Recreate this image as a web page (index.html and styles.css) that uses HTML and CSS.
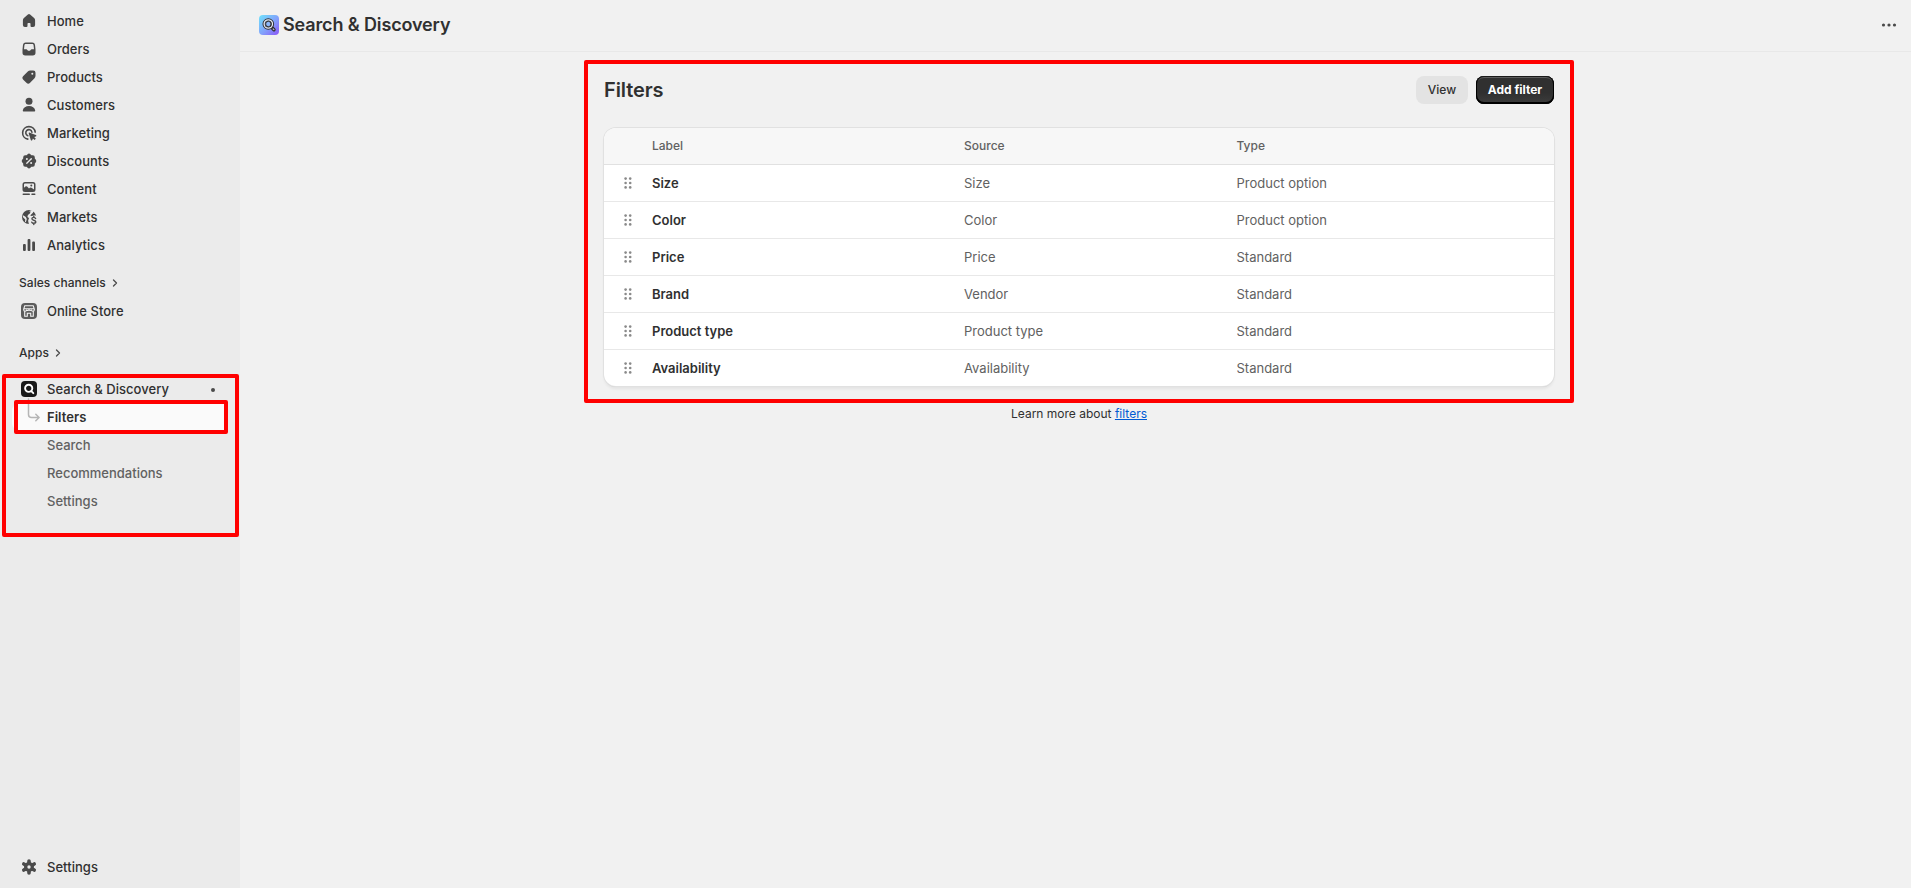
FILE: index.html
```html
<!DOCTYPE html>
<html lang="en">
<head>
    <meta charset="UTF-8">
    <meta name="viewport" content="width=device-width, initial-scale=1.0">
    <title>Search &amp; Discovery - Filters</title>
    <link rel="stylesheet" href="styles.css">
</head>
<body>

    <aside class="sidebar">
        <nav class="nav">
            <a class="nav-item">
                <svg class="icon" viewBox="0 0 20 20"><path d="M8.9 3.4a1.6 1.6 0 0 1 2.2 0l4 3.7c.7.6 1 1.5 1 2.4v4.6a2 2 0 0 1-2 2h-1.6a1 1 0 0 1-1-1v-2.4a.75.75 0 0 0-.75-.75h-1.5a.75.75 0 0 0-.75.75v2.4a1 1 0 0 1-1 1H5.9a2 2 0 0 1-2-2V9.500c0-.9.3-1.800 1-2.400z"/></svg>
                <span>Home</span>
            </a>
            <a class="nav-item">
                <svg class="icon" viewBox="0 0 20 20"><path fill-rule="evenodd" d="M6.700 3.500a2.750 2.750 0 0 0-2.700 2.300l-.5 4.700v3.250a2.750 2.750 0 0 0 2.750 2.750h7.500a2.750 2.750 0 0 0 2.750-2.750V10.500l-.5-4.700a2.750 2.750 0 0 0-2.700-2.300zM5.450 6.100c.1-.65.600-1.100 1.250-1.100h6.600c.65 0 1.150.45 1.250 1.100l.45 4.150h-2.300c-.45 0-.8.250-1.050.65-.35.600-.9.900-1.650.900s-1.300-.3-1.650-.9c-.25-.4-.6-.65-1.050-.65H5z"/></svg>
                <span>Orders</span>
            </a>
            <a class="nav-item">
                <svg class="icon" viewBox="0 0 20 20"><path fill-rule="evenodd" d="M11.200 3.500h3.050a2.250 2.250 0 0 1 2.250 2.250v3.100c0 .9-.35 1.750-1 2.400l-4.400 4.500a2.600 2.600 0 0 1-3.700 0l-3.100-3.100a2.600 2.600 0 0 1 0-3.700l4.500-4.450a3.400 3.400 0 0 1 2.400-1zM13.300 7.700a1 1 0 1 0 0-2 1 1 0 0 0 0 2z"/></svg>
                <span>Products</span>
            </a>
            <a class="nav-item">
                <svg class="icon" viewBox="0 0 20 20"><circle cx="10" cy="6.300" r="3.500"/><path d="M3.800 15.400c.4-2.700 3-4.300 6.200-4.300s5.800 1.600 6.200 4.300c.1.700-.4 1.200-1 1.200H4.800c-.6 0-1.100-.5-1-1.200z"/></svg>
                <span>Customers</span>
            </a>
            <a class="nav-item">
                <svg class="icon" viewBox="0 0 20 20"><g class="line"><path d="M16.200 9.200A6.300 6.300 0 1 0 8.800 16.100"/><path d="M12.900 9.100a3.100 3.100 0 1 0-4.100 3.600"/></g><path d="M9.800 10.700c-.3-.7.300-1.300 1-1l6 2.200c.8.300.8 1.300 0 1.600l-1.600.6 1.600 1.700-1.200 1.200-1.700-1.600-.6 1.500c-.3.800-1.300.7-1.500 0z"/></svg>
                <span>Marketing</span>
            </a>
            <a class="nav-item">
                <svg class="icon" viewBox="0 0 20 20"><path d="M8.600 3.300a2 2 0 0 1 2.800 0l1 .9h1.400a2 2 0 0 1 2 2v1.400l.9 1a2 2 0 0 1 0 2.800l-.9 1v1.400a2 2 0 0 1-2 2h-1.400l-1 .9a2 2 0 0 1-2.800 0l-1-.9H6.200a2 2 0 0 1-2-2v-1.400l-.9-1a2 2 0 0 1 0-2.800l.9-1V6.200a2 2 0 0 1 2-2h1.400z"/><path class="cut" d="M7.800 12.300l4.500-4.600"/><circle class="hole" cx="7.900" cy="8" r="1"/><circle class="hole" cx="12.100" cy="12" r="1"/></svg>
                <span>Discounts</span>
            </a>
            <a class="nav-item">
                <svg class="icon" viewBox="0 0 20 20"><path fill-rule="evenodd" d="M6 3h8a2.500 2.500 0 0 1 2.500 2.500v5A2.500 2.500 0 0 1 14 13H6a2.500 2.500 0 0 1-2.500-2.500v-5A2.500 2.500 0 0 1 6 3zM6 4.500a1 1 0 0 0-1 1v3.300l1.400-1.200a1.300 1.300 0 0 1 1.700 0l1.900 1.800.9-.7a1.300 1.300 0 0 1 1.600 0l2.500 1.700V5.500a1 1 0 0 0-1-1zM12.300 7.500a1 1 0 1 0 0-2 1 1 0 0 0 0 2z"/><path d="M4.250 14.500h6a.75.75 0 0 1 0 1.500h-6a.75.75 0 0 1 0-1.500zM13 14.500h2.750a.75.75 0 0 1 0 1.500H13a.75.75 0 0 1 0-1.500z"/></svg>
                <span>Content</span>
            </a>
            <a class="nav-item">
                <svg class="icon" viewBox="0 0 20 20"><circle cx="10" cy="10" r="7"/><path class="hole" d="M9.700 4.300l2 .3-.9 2-1.900 1.500-.5 1.800 1.600 1.200-.9 2.600.8 3.600h8.600V9.500l-3.200-1.300-2.600.8-1.500-.6 2.700-2.600 1.200-2.500-2-.3zM4.200 8.200l2.600 1.700 1 2.200-.9 3.200-.9-.6.300-2.300-2.500-2.500z"/><path class="line dollar" d="M16.600 11.500c-.3-.7-1-1.100-1.800-1.100-1.100 0-1.900.500-1.900 1.400 0 1.900 3.900 1 3.900 3 0 .9-.9 1.500-2 1.500-.9 0-1.700-.4-2-1.100M14.800 9.100v1.200M14.800 16.400v1.200"/></svg>
                <span>Markets</span>
            </a>
            <a class="nav-item">
                <svg class="icon" viewBox="0 0 20 20"><rect x="4" y="9" width="2.800" height="7" rx="1"/><rect x="8.600" y="4" width="2.800" height="12" rx="1"/><rect x="13.200" y="6.500" width="2.800" height="9.500" rx="1"/></svg>
                <span>Analytics</span>
            </a>
        </nav>

        <div class="section-title">
            <span>Sales channels</span>
            <svg class="chevron" viewBox="0 0 8 8"><path d="M2.500 1l3 3-3 3"/></svg>
        </div>
        <nav class="nav">
            <a class="nav-item">
                <svg class="icon" viewBox="0 0 20 20"><rect class="store-bg" x="2" y="2" width="16" height="16" rx="4"/><path class="store-line" d="M5.800 4.700h8.400l1.100 3.500v.6a1.400 1.400 0 0 1-2.800 0 1.400 1.400 0 0 1-2.500 0 1.400 1.400 0 0 1-2.500 0 1.400 1.400 0 0 1-2.800 0v-.6zM5 7.700h10M5.700 10.200v5.100h2.600v-3.100h3.400v3.100h2.600v-5.100"/></svg>
                <span>Online Store</span>
            </a>
        </nav>

        <div class="section-title apps-title">
            <span>Apps</span>
            <svg class="chevron" viewBox="0 0 8 8"><path d="M2.500 1l3 3-3 3"/></svg>
        </div>
        <div class="app-group">
            <nav class="nav">
                <a class="nav-item">
                    <svg class="icon" viewBox="0 0 20 20"><rect class="app-bg" x="2" y="2" width="16" height="16" rx="4"/><circle class="app-line" cx="9.700" cy="9.300" r="3.600"/><path class="app-line" d="M12.300 12.200l2 2"/></svg>
                    <span>Search &amp; Discovery</span>
                    <i class="pin-dot"></i>
                </a>
                <a class="nav-item active">
                    <svg class="icon branch" viewBox="0 0 20 28"><path d="M9.500 0v15.500a3 3 0 0 0 3 3H20M16.800 15.200l3.300 3.300-3.300 3.300"/></svg>
                    <span>Filters</span>
                </a>
                <a class="nav-item sub">Search</a>
                <a class="nav-item sub">Recommendations</a>
                <a class="nav-item sub">Settings</a>
            </nav>
            <div class="highlight highlight-app"></div>
            <div class="highlight highlight-link"></div>
        </div>

        <nav class="nav nav-bottom">
            <a class="nav-item">
                <svg class="icon" viewBox="0 0 20 20"><g class="gear"><path d="M10 4v12M4.800 7l10.400 6M15.200 7L4.800 13"/></g><circle cx="10" cy="10" r="5"/><circle class="hole" cx="10" cy="10" r="1.700"/></svg>
                <span>Settings</span>
            </a>
        </nav>
    </aside>

    <main class="main">
        <header class="topbar">
            <svg class="app-logo" viewBox="0 0 20 20">
                <defs>
                    <linearGradient id="logoFill" x1="0" y1="0" x2="1" y2="1">
                        <stop offset="0" stop-color="#6fe3fb"/>
                        <stop offset=".55" stop-color="#839ffb"/>
                        <stop offset="1" stop-color="#8a55f7"/>
                    </linearGradient>
                </defs>
                <rect width="20" height="20" rx="4" fill="url(#logoFill)"/>
                <path class="lens-dark" d="M12.800 12.500l2.200 2.300"/>
                <circle class="lens-ring" cx="9.300" cy="9" r="4.300"/>
                <circle class="lens-light" cx="9.300" cy="9" r="4.200"/>
                <circle class="lens-inner" cx="9.300" cy="9" r="2.700"/>
                <path class="lens-handle" d="M14.200 14l.7.700"/>
            </svg>
            <h1>Search &amp; Discovery</h1>
            <svg class="more" viewBox="0 0 20 20"><circle cx="4.500" cy="10" r="1.600"/><circle cx="10" cy="10" r="1.600"/><circle cx="15.500" cy="10" r="1.600"/></svg>
        </header>

        <section class="page">
            <div class="page-header">
                <h2>Filters</h2>
                <button class="btn">View</button>
                <button class="btn btn-primary">Add filter</button>
            </div>

            <div class="card">
                <div class="row row-head">
                    <span></span><span>Label</span><span>Source</span><span>Type</span>
                </div>
                <div class="row">
                    <svg class="drag" viewBox="0 0 8 12"><use href="#dots"/></svg>
                    <b>Size</b><span>Size</span><span>Product option</span>
                </div>
                <div class="row">
                    <svg class="drag" viewBox="0 0 8 12"><use href="#dots"/></svg>
                    <b>Color</b><span>Color</span><span>Product option</span>
                </div>
                <div class="row">
                    <svg class="drag" viewBox="0 0 8 12"><use href="#dots"/></svg>
                    <b>Price</b><span>Price</span><span>Standard</span>
                </div>
                <div class="row">
                    <svg class="drag" viewBox="0 0 8 12"><use href="#dots"/></svg>
                    <b>Brand</b><span>Vendor</span><span>Standard</span>
                </div>
                <div class="row">
                    <svg class="drag" viewBox="0 0 8 12"><use href="#dots"/></svg>
                    <b>Product type</b><span>Product type</span><span>Standard</span>
                </div>
                <div class="row">
                    <svg class="drag" viewBox="0 0 8 12"><use href="#dots"/></svg>
                    <b>Availability</b><span>Availability</span><span>Standard</span>
                </div>
            </div>

            <p class="learn-more">Learn more about <a href="#">filters</a></p>
            <div class="highlight highlight-page"></div>
        </section>
    </main>

    <svg class="sprite">
        <defs>
            <g id="dots">
                <circle cx="1.600" cy="1.600" r="1.300"/><circle cx="6.200" cy="1.600" r="1.300"/>
                <circle cx="1.600" cy="6" r="1.300"/><circle cx="6.200" cy="6" r="1.300"/>
                <circle cx="1.600" cy="10.400" r="1.300"/><circle cx="6.200" cy="10.400" r="1.300"/>
            </g>
        </defs>
    </svg>

</body>
</html>
```

FILE: styles.css
```css
* {
    box-sizing: border-box;
}

body {
    margin: 0;
    height: 100vh;
    display: flex;
    overflow: hidden;
    background: #f1f1f1;
    color: #303030;
    font-family: Inter, "Liberation Sans", sans-serif;
    font-size: 13px;
    line-height: 20px;
}

/* --- Sidebar --- */
.sidebar {
    width: 240px;
    flex: none;
    display: flex;
    flex-direction: column;
    padding: 7px 12px 7px;
    background: #ebebeb;
}

.nav-item {
    position: relative;
    display: flex;
    align-items: center;
    gap: 8px;
    height: 28px;
    padding-left: 7px;
    border-radius: 8px;
    font-weight: 550;
    letter-spacing: .03px;
}

.nav-item.sub {
    padding-left: 35px;
    font-weight: 450;
    letter-spacing: 0;
    color: #616161;
}

.nav-item.active {
    background: #fafafa;
    font-weight: 600;
}

.icon {
    width: 20px;
    height: 20px;
    flex: none;
    fill: #4a4a4a;
}

.icon .line {
    fill: none;
    stroke: #4a4a4a;
    stroke-width: 1.6;
    stroke-linecap: round;
}

.icon .dollar {
    stroke-width: 1.4;
}

.icon .gear {
    stroke: #4a4a4a;
    stroke-width: 3.6;
    stroke-linecap: round;
}

.icon .cut {
    fill: none;
    stroke: #ebebeb;
    stroke-width: 1.3;
    stroke-linecap: round;
}

.icon .hole {
    fill: #ebebeb;
}

.icon .store-bg {
    fill: #5c5c5c;
}

.icon .store-line {
    fill: none;
    stroke: #f3f3f3;
    stroke-width: 1.1;
}

.icon .app-bg {
    fill: #1a1a1a;
}

.icon .app-line {
    fill: none;
    stroke: #fff;
    stroke-width: 1.9;
    stroke-linecap: round;
}

.icon.branch {
    height: 28px;
    margin-top: -8px;
    fill: none;
    stroke: #b5b5b5;
    stroke-width: 1.5;
    stroke-linecap: round;
    stroke-linejoin: round;
    overflow: visible;
}

.pin-dot {
    width: 4px;
    height: 4px;
    margin: 1px 13px 0 auto;
    border-radius: 50%;
    background: #4a4a4a;
}

.section-title {
    display: flex;
    align-items: center;
    gap: 5px;
    height: 28px;
    margin-top: 10px;
    padding-left: 7px;
    font-size: 12px;
    font-weight: 550;
    letter-spacing: .04px;
}

.apps-title {
    margin-top: 14px;
}

.chevron {
    width: 8px;
    height: 8px;
    fill: none;
    stroke: #4a4a4a;
    stroke-width: 1.3;
    stroke-linecap: round;
    stroke-linejoin: round;
}

.app-group {
    position: relative;
    margin-top: 8px;
}

.nav-bottom {
    margin-top: auto;
}

/* --- Red marker frames --- */
.highlight {
    position: absolute;
    border: 4px solid #f00;
    border-radius: 2px;
    pointer-events: none;
}

.highlight-app {
    top: -1px;
    left: -10px;
    width: 237px;
    height: 163px;
}

.highlight-link {
    top: 25px;
    left: 2px;
    width: 214px;
    height: 34px;
}

.highlight-page {
    top: 8px;
    left: -20px;
    width: 990px;
    height: 343px;
}

/* --- Top bar --- */
.main {
    flex: 1;
}

.topbar {
    display: flex;
    align-items: center;
    height: 52px;
    padding: 0 12px 2px 19px;
    border-bottom: 1px solid #e8e8e8;
}

.topbar h1 {
    margin: 0 auto 0 4px;
    font-size: 18px;
    font-weight: 600;
    line-height: 24px;
    letter-spacing: -.13px;
}

.app-logo {
    width: 20px;
    height: 20px;
}

.lens-dark {
    stroke: #303030;
    stroke-width: 3.4;
    stroke-linecap: round;
}

.lens-ring {
    fill: #c9d8fb;
    stroke: #303030;
    stroke-width: 3;
}

.lens-light {
    fill: none;
    stroke: #e6eafa;
    stroke-width: 1.3;
}

.lens-inner {
    fill: #8db7fb;
    stroke: #303030;
    stroke-width: 1;
}

.lens-handle {
    stroke: #b9b9d8;
    stroke-width: 1.2;
    stroke-linecap: round;
}

.more {
    width: 20px;
    height: 20px;
    fill: #4a4a4a;
}

/* --- Page --- */
.page {
    position: relative;
    width: 950px;
    margin: 0 auto;
    left: 3.5px;
}

.page-header {
    display: flex;
    align-items: center;
    gap: 8px;
    padding: 24px 0 24px;
}

.page-header h2 {
    margin: 0 auto 0 0;
    font-size: 20px;
    font-weight: 600;
    line-height: 24px;
    letter-spacing: -.1px;
}

.btn {
    width: 52px;
    height: 28px;
    padding: 0;
    border: 0;
    border-radius: 8px;
    background: #e3e3e3;
    color: #303030;
    font: 500 12px/16px Inter, "Liberation Sans", sans-serif;
}

.btn-primary {
    width: 78px;
    background: linear-gradient(#303030 60%, #3d3d3d);
    color: #fff;
    font-weight: 700;
    box-shadow: inset 0 -1px 0 1px #000, inset 0 0 0 1px #1a1a1a, inset 0 2px 0 #5c5c5c;
}

.card {
    border-radius: 12px;
    background: #fff;
    box-shadow: 0 0 0 1px #e1e1e1, 0 1px 0 #cbcbcb, 0 3px 3px rgba(0, 0, 0, .06);
    overflow: hidden;
}

.row {
    display: grid;
    grid-template-columns: 48px 312px 272.500px 1fr;
    align-items: center;
    height: 37px;
    border-bottom: 1px solid #e8e8e8;
    color: #616161;
}

.row:last-child {
    height: 36px;
    border-bottom: 0;
}

.row b {
    color: #303030;
    font-weight: 600;
}

.row-head {
    background: #f7f7f7;
    border-color: #e1e1e1;
    font-size: 12px;
    font-weight: 500;
}

.drag {
    width: 8px;
    height: 12px;
    margin-left: 20px;
    fill: #8a8a8a;
}

.learn-more {
    margin: 18px 0 0;
    text-align: center;
    font-size: 12px;
}

.learn-more a {
    color: #005bd3;
}

.sprite {
    position: absolute;
    width: 0;
    height: 0;
}
```
